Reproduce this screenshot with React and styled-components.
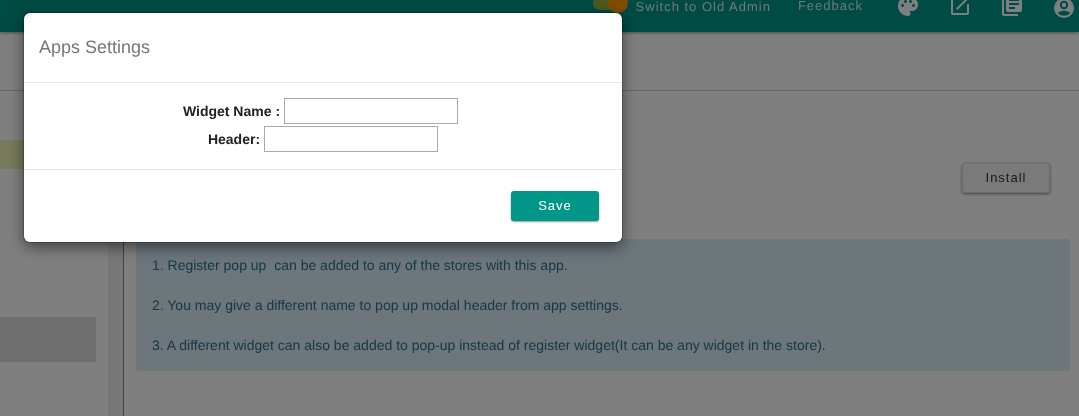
import React from 'react';
import styled, { createGlobalStyle } from 'styled-components';
import { MdPalette, MdLibraryBooks } from 'react-icons/md';

const GlobalStyle = createGlobalStyle`
  html, body {
    margin: 0;
    padding: 0;
    height: 100%;
    overflow: hidden;
    background: #fff;
    font-family: "Liberation Sans", Arial, sans-serif;
    text-rendering: geometricPrecision;
  }
`;

const Page = styled.div`
  width: 1079px;
  height: 416px;
  display: flex;
  flex-direction: column;
  overflow: hidden;
  will-change: transform;
`;

const TopBar = styled.header`
  height: 32px;
  flex: none;
  background: #009688;
  box-shadow: 0 1px 3px rgba(0, 0, 0, 0.4);
  display: flex;
  justify-content: flex-end;
  color: #fff;
`;

const ToggleTrack = styled.div`
  position: relative;
  width: 27px;
  height: 14px;
  margin-top: -4px;
  border-radius: 7px;
  background: #9fb03f;
`;

const ToggleThumb = styled.div`
  position: absolute;
  top: -3px;
  right: -8px;
  width: 20px;
  height: 20px;
  border-radius: 50%;
  background: #ff9800;
`;

const TopLink = styled.span`
  font-size: 13px;
  line-height: 11px;
  letter-spacing: 1px;
  white-space: nowrap;
  opacity: 0.85;
  margin-left: ${(p) => p.$left}px;
  margin-top: ${(p) => p.$top}px;
`;

const IconRow = styled.div`
  display: flex;
  gap: 28px;
  margin: -6px 3px 0 33px;
  font-size: 24px;
  & > svg {
    width: 24px;
    height: 24px;
    display: block;
  }
  & > svg:last-child {
    margin-top: 2px;
  }
`;

const SubBar = styled.div`
  height: 58px;
  flex: none;
  border-bottom: 1px solid #ccc;
`;

const Body = styled.div`
  flex: 1;
  display: flex;
  min-height: 0;
`;

const Sidebar = styled.aside`
  width: 108px;
  flex: none;
  display: flex;
  flex-direction: column;
  padding-top: 49px;
`;

const SideActive = styled.div`
  height: 29px;
  background: #f0f5b8;
`;

const SideItem = styled.div`
  width: 96px;
  height: 45px;
  margin-top: 148px;
  background: #dcdcdc;
`;

const ScrollGutter = styled.div`
  width: 15px;
  flex: none;
  background: #f1f1f1;
  border-right: 1px solid #888;
`;

const Main = styled.main`
  flex: 1;
  min-width: 0;
  padding: 72px 9px 0 12px;
  display: flex;
  flex-direction: column;
`;

const ActionRow = styled.div`
  display: flex;
  justify-content: flex-end;
  padding-right: 20px;
`;

const InstallButton = styled.button`
  width: 88px;
  height: 30px;
  padding: 0 0 2px;
  border: 1px solid #ddd;
  border-radius: 3px;
  background: #f5f5f5;
  box-shadow: 0 1px 3px rgba(0, 0, 0, 0.5);
  color: #333;
  font: 13px "Liberation Sans", Arial, sans-serif;
  letter-spacing: 1px;
`;

const InfoBox = styled.div`
  margin-top: 46px;
  height: 132px;
  box-sizing: border-box;
  padding: 16px 16px 0;
  border-radius: 4px;
  background: #d9edf7;
  color: #31708f;
  font-size: 14px;
  line-height: 20px;
`;

const InfoLine = styled.p`
  margin: 0 0 20px;
  white-space: pre-wrap;
`;

const Backdrop = styled.div`
  position: fixed;
  inset: 0;
  background: rgba(0, 0, 0, 0.5);
`;

const Modal = styled.div`
  position: fixed;
  left: 24px;
  top: 13px;
  width: 598px;
  height: 229px;
  display: flex;
  flex-direction: column;
  background: #fff;
  border-radius: 6px;
  box-shadow: 0 0 0 1px rgba(0, 0, 0, 0.2), 0 5px 15px rgba(0, 0, 0, 0.5);
`;

const ModalHeader = styled.div`
  height: 69px;
  flex: none;
  box-sizing: content-box;
  padding-left: 15px;
  border-bottom: 1px solid #e5e5e5;
  display: flex;
  align-items: center;
  color: #777;
  font-size: 18px;
`;

const ModalBody = styled.div`
  height: 87px;
  flex: none;
  box-sizing: border-box;
  padding-top: 15px;
  border-bottom: 1px solid #e5e5e5;
  display: flex;
  flex-direction: column;
  align-items: center;
  gap: 2px;
`;

const FieldRow = styled.div`
  display: flex;
  align-items: center;
  gap: 4px;
  height: 26px;
  padding-right: ${(p) => p.$trail || 0}px;
  color: #222;
  font-size: 14px;
  font-weight: 700;
`;

const FieldInput = styled.input`
  width: 174px;
  height: 26px;
  box-sizing: border-box;
  padding: 1px 2px;
  border: 1px solid #a9a9a9;
  background: #fff;
`;

const ModalFooter = styled.div`
  flex: 1;
  display: flex;
  justify-content: flex-end;
  padding: 21px 23px 0 0;
`;

const SaveButton = styled.button`
  width: 88px;
  height: 30px;
  padding: 0 0 2px;
  border: none;
  border-radius: 3px;
  background: #009688;
  box-shadow: 0 1px 2px rgba(0, 0, 0, 0.4);
  color: #fff;
  font: 13px "Liberation Sans", Arial, sans-serif;
  letter-spacing: 1px;
`;

const NoteIcon = () => (
  <svg viewBox="0 0 24 24" fill="currentColor">
    <path d="M19 19H5V5h9V3H5c-1.1 0-2 .9-2 2v14c0 1.1.9 2 2 2h14c1.1 0 2-.9 2-2v-9h-2v9z" />
    <path d="M8.5 14.1 19.6 3l1.4 1.4L9.9 15.5H8.5z" />
  </svg>
);

// filled disc, ring round the head, lens for the shoulders
const AccountIcon = () => (
  <svg viewBox="0 0 24 24" fill="currentColor" fillRule="evenodd">
    <path d="M12 2a10 10 0 1 0 0 20 10 10 0 0 0 0-20z" />
    <path
      fill="#009688"
      d="M12 4.8a4.2 4.2 0 1 0 0 8.4 4.2 4.2 0 0 0 0-8.4zm0 2a2.2 2.2 0 1 1 0 4.4 2.2 2.2 0 0 1 0-4.4zM12 14.8c-2.6 0-5 .9-6.2 2.3 1.4 1.7 3.7 2.7 6.2 2.7s4.8-1 6.2-2.7c-1.2-1.4-3.6-2.3-6.2-2.3z"
    />
  </svg>
);

const notes = [
  '1. Register pop up  can be added to any of the stores with this app.',
  '2. You may give a different name to pop up modal header from app settings.',
  '3. A different widget can also be added to pop-up instead of register widget(It can be any widget in the store).',
];

const App = () => (
  <Page>
    <GlobalStyle />
    <TopBar>
      <ToggleTrack>
        <ToggleThumb />
      </ToggleTrack>
      <TopLink $left={16} $top={1}>Switch to Old Admin</TopLink>
      <TopLink $left={27} $top={0}>Feedback</TopLink>
      <IconRow>
        <MdPalette />
        <NoteIcon />
        <MdLibraryBooks />
        <AccountIcon />
      </IconRow>
    </TopBar>
    <SubBar />
    <Body>
      <Sidebar>
        <SideActive />
        <SideItem />
      </Sidebar>
      <ScrollGutter />
      <Main>
        <ActionRow>
          <InstallButton>Install</InstallButton>
        </ActionRow>
        <InfoBox>
          {notes.map((n) => (
            <InfoLine key={n}>{n}</InfoLine>
          ))}
        </InfoBox>
      </Main>
    </Body>
    <Backdrop />
    <Modal>
      <ModalHeader>Apps Settings</ModalHeader>
      <ModalBody>
        <FieldRow $trail={5}>
          Widget Name :
          <FieldInput />
        </FieldRow>
        <FieldRow>
          Header:
          <FieldInput />
        </FieldRow>
      </ModalBody>
      <ModalFooter>
        <SaveButton>Save</SaveButton>
      </ModalFooter>
    </Modal>
  </Page>
);

export default App;
